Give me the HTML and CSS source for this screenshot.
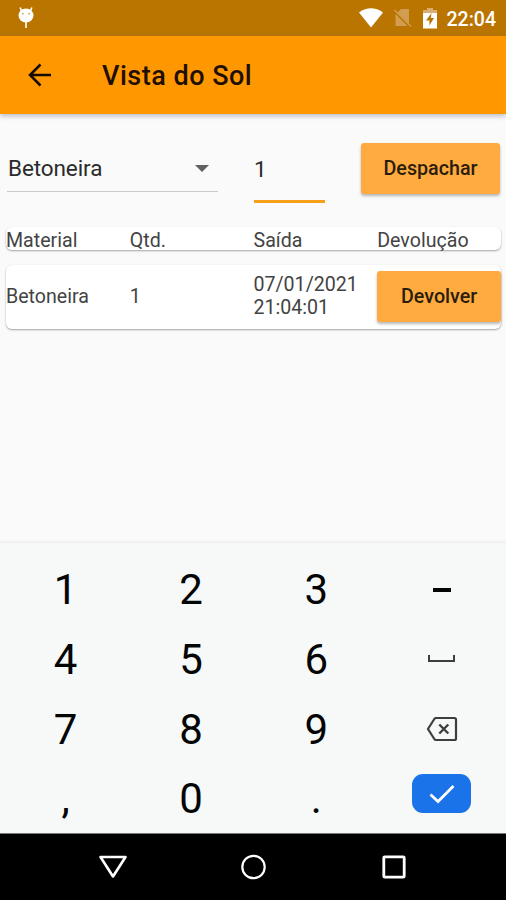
FILE: index.html
```html
<!DOCTYPE html>
<html lang="pt">
<head>
  <meta charset="UTF-8">
  <meta name="viewport" content="width=device-width, initial-scale=1.0">
  <title>Vista do Sol</title>
  <link rel="stylesheet" href="styles.css">
</head>
<body>
  <div class="status">
    <svg class="debug" width="18" height="24" viewBox="0 0 18 24">
      <path d="M4.500 5L3.200 1.500M13.500 5L14.800 1.500M9 15v7" stroke="#fff" stroke-width="1.600" fill="none"/>
      <ellipse cx="9" cy="9.500" rx="7.500" ry="7" fill="#fff"/>
      <circle cx="5.900" cy="7.700" r="0.900" fill="#c9a468"/>
      <circle cx="12.100" cy="7.700" r="0.900" fill="#c9a468"/>
    </svg>
    <div class="status-icons">
      <svg width="24" height="20" viewBox="0 0 24 20">
        <path d="M0 4.500Q12 -3.800 24 4.500L12 19.500Z" fill="#fff"/>
      </svg>
      <svg width="18" height="20" viewBox="0 0 18 20">
        <path d="M7 1h8v15L3.500 4.500ZM1.500 6L13.500 18H1.500Z" fill="#d29d51"/>
        <path d="M0.500 2L17 18.500" stroke="#d29d51" stroke-width="1.500"/>
      </svg>
      <svg width="14" height="21" viewBox="0 0 14 21">
        <path d="M4 0h6v2h4v4H0V2h4Z" fill="#d9ae70"/>
        <path d="M0 5h14v15.500H0Z" fill="#fff"/>
        <path d="M8.500 5L3 12.500h3.400v5L11 10H7.800Z" fill="#b77400"/>
      </svg>
      <span class="clock">22:04</span>
    </div>
  </div>

  <header class="appbar">
    <svg width="24" height="24" viewBox="0 0 24 24">
      <path d="M23 12H2.500M12.500 1.500L2 12L12.500 22.500" stroke="#150b00" stroke-width="2.500" fill="none"/>
    </svg>
    <h1>Vista do Sol</h1>
  </header>

  <main class="content">
    <div class="form">
      <div class="select">
        <span>Betoneira</span>
        <span class="caret"></span>
      </div>
      <div class="quantity">1</div>
      <button class="btn">Despachar</button>
    </div>

    <div class="card head">
      <span>Material</span>
      <span>Qtd.</span>
      <span>Saída</span>
      <span>Devolução</span>
    </div>

    <div class="card item">
      <span>Betoneira</span>
      <span>1</span>
      <span>07/01/2021<br>21:04:01</span>
      <button class="btn">Devolver</button>
    </div>
  </main>

  <div class="keyboard">
    <div class="key">1</div>
    <div class="key">2</div>
    <div class="key">3</div>
    <div class="key"><span class="minus"></span></div>
    <div class="key">4</div>
    <div class="key">5</div>
    <div class="key">6</div>
    <div class="key"><span class="space"></span></div>
    <div class="key">7</div>
    <div class="key">8</div>
    <div class="key">9</div>
    <div class="key">
      <svg width="32" height="26" viewBox="0 0 32 26">
        <path d="M10 2H28.500Q30 2 30 3.500V22.500Q30 24 28.500 24H10Q9 24 8.300 23L2 13L8.300 3Q9 2 10 2Z" stroke="#3c3f41" stroke-width="2.200" fill="none"/>
        <path d="M13.300 8.500L22.300 17.500M22.300 8.500L13.300 17.500" stroke="#3c3f41" stroke-width="2.400"/>
      </svg>
    </div>
    <div class="key">,</div>
    <div class="key">0</div>
    <div class="key">.</div>
    <div class="key">
      <span class="enter">
        <svg width="26" height="20" viewBox="0 0 26 20">
          <path d="M1.500 10.500L9 17.500L24.500 2" stroke="#fff" stroke-width="2.700" fill="none"/>
        </svg>
      </span>
    </div>
  </div>

  <nav class="navbar">
    <svg width="30" height="26" viewBox="0 0 30 26">
      <path d="M2.500 3H27.500L15 22.500Z" stroke="#fff" stroke-width="2.600" stroke-linejoin="round" fill="none"/>
    </svg>
    <svg width="30" height="26" viewBox="0 0 30 26">
      <circle cx="15.500" cy="13" r="11.200" stroke="#fff" stroke-width="2.200" fill="none"/>
    </svg>
    <svg width="30" height="26" viewBox="0 0 30 26">
      <rect x="4.800" y="2.800" width="20.400" height="20.400" rx="1" stroke="#fff" stroke-width="2.800" fill="none"/>
    </svg>
  </nav>
</body>
</html>
```

FILE: styles.css
```css
* {
  box-sizing: border-box;
}

body {
  margin: 0;
  height: 900px;
  display: flex;
  flex-direction: column;
  overflow: hidden;
  background-color: #fafafa;
  font-family: Roboto, sans-serif;
  color: #2b2b2b;
}

.status {
  height: 36px;
  display: flex;
  justify-content: space-between;
  align-items: center;
  padding: 0 10px 0 17px;
  background-color: #b97500;
}

.status-icons {
  display: flex;
  align-items: center;
  gap: 11px;
}

.clock {
  font-size: 19.5px;
  font-weight: 500;
  color: #fff;
  margin: 2px 0 0 -1px;
}

.appbar {
  height: 78px;
  display: flex;
  align-items: center;
  gap: 50px;
  padding-left: 28px;
  background-color: #ff9800;
  box-shadow: 0 2px 5px rgba(60, 70, 110, 0.35);
}

.appbar h1 {
  margin: 2px 0 0;
  font-size: 27px;
  font-weight: 500;
  letter-spacing: 0.5px;
  color: #1e0f00;
}

.content {
  flex: 1;
  padding: 28px 5px 0 6px;
}

.form {
  display: flex;
  align-items: flex-start;
  font-size: 22.5px;
}

.select {
  width: 211px;
  height: 50px;
  margin-left: 1px;
  padding: 3px 9px 0 1px;
  display: flex;
  justify-content: space-between;
  align-items: center;
  border-bottom: 1px solid #cacaca;
  letter-spacing: -0.1px;
}

.caret {
  border: 7px solid transparent;
  border-top-color: #616161;
  border-bottom: none;
}

.quantity {
  width: 71px;
  height: 61px;
  margin: 0 36px 0 36px;
  padding-top: 14px;
  border-bottom: 3px solid #f9a01b;
}

.btn {
  height: 51px;
  border: none;
  border-radius: 3px;
  padding: 0;
  background-color: #ffab40;
  box-shadow: 0 2px 3px rgba(0, 0, 0, 0.28);
  font-family: inherit;
  font-size: 19.7px;
  font-weight: 500;
  color: #2b1d0b;
}

.form .btn {
  width: 139px;
  margin-top: 1px;
}

.card {
  display: grid;
  grid-template-columns: repeat(4, 1fr);
  align-items: center;
  background-color: #fff;
  border-radius: 6px;
  box-shadow: 0 1px 2px rgba(0, 0, 0, 0.35);
  font-size: 19.6px;
  line-height: 23px;
  color: #434343;
}

.head {
  height: 23px;
  margin-top: 24px;
  padding-top: 2px;
}

.item {
  height: 64px;
  margin-top: 15px;
  padding-bottom: 2px;
}

.keyboard {
  height: 290px;
  display: grid;
  grid-template-columns: repeat(4, 125.3px);
  grid-template-rows: repeat(4, 69.7px);
  padding: 12px 0 0 3px;
  background-color: #f6f9f8;
  box-shadow: 0 -1px 3px rgba(0, 0, 0, 0.08);
}

.key {
  display: flex;
  justify-content: center;
  align-items: center;
  font-size: 42px;
  color: #050505;
}

.minus {
  width: 18px;
  height: 4px;
  background-color: #050505;
}

.space {
  width: 27px;
  height: 7px;
  margin-bottom: 2px;
  border: 2px solid #3c3f41;
  border-top: none;
}

.enter {
  width: 59px;
  height: 39px;
  margin-bottom: 10px;
  display: flex;
  justify-content: center;
  align-items: center;
  border-radius: 11px;
  background-color: #1a73e8;
}

.navbar {
  height: 67px;
  display: flex;
  justify-content: center;
  align-items: center;
  gap: 110.5px;
  border-top: 1px solid #777;
  background-color: #000;
}
```
